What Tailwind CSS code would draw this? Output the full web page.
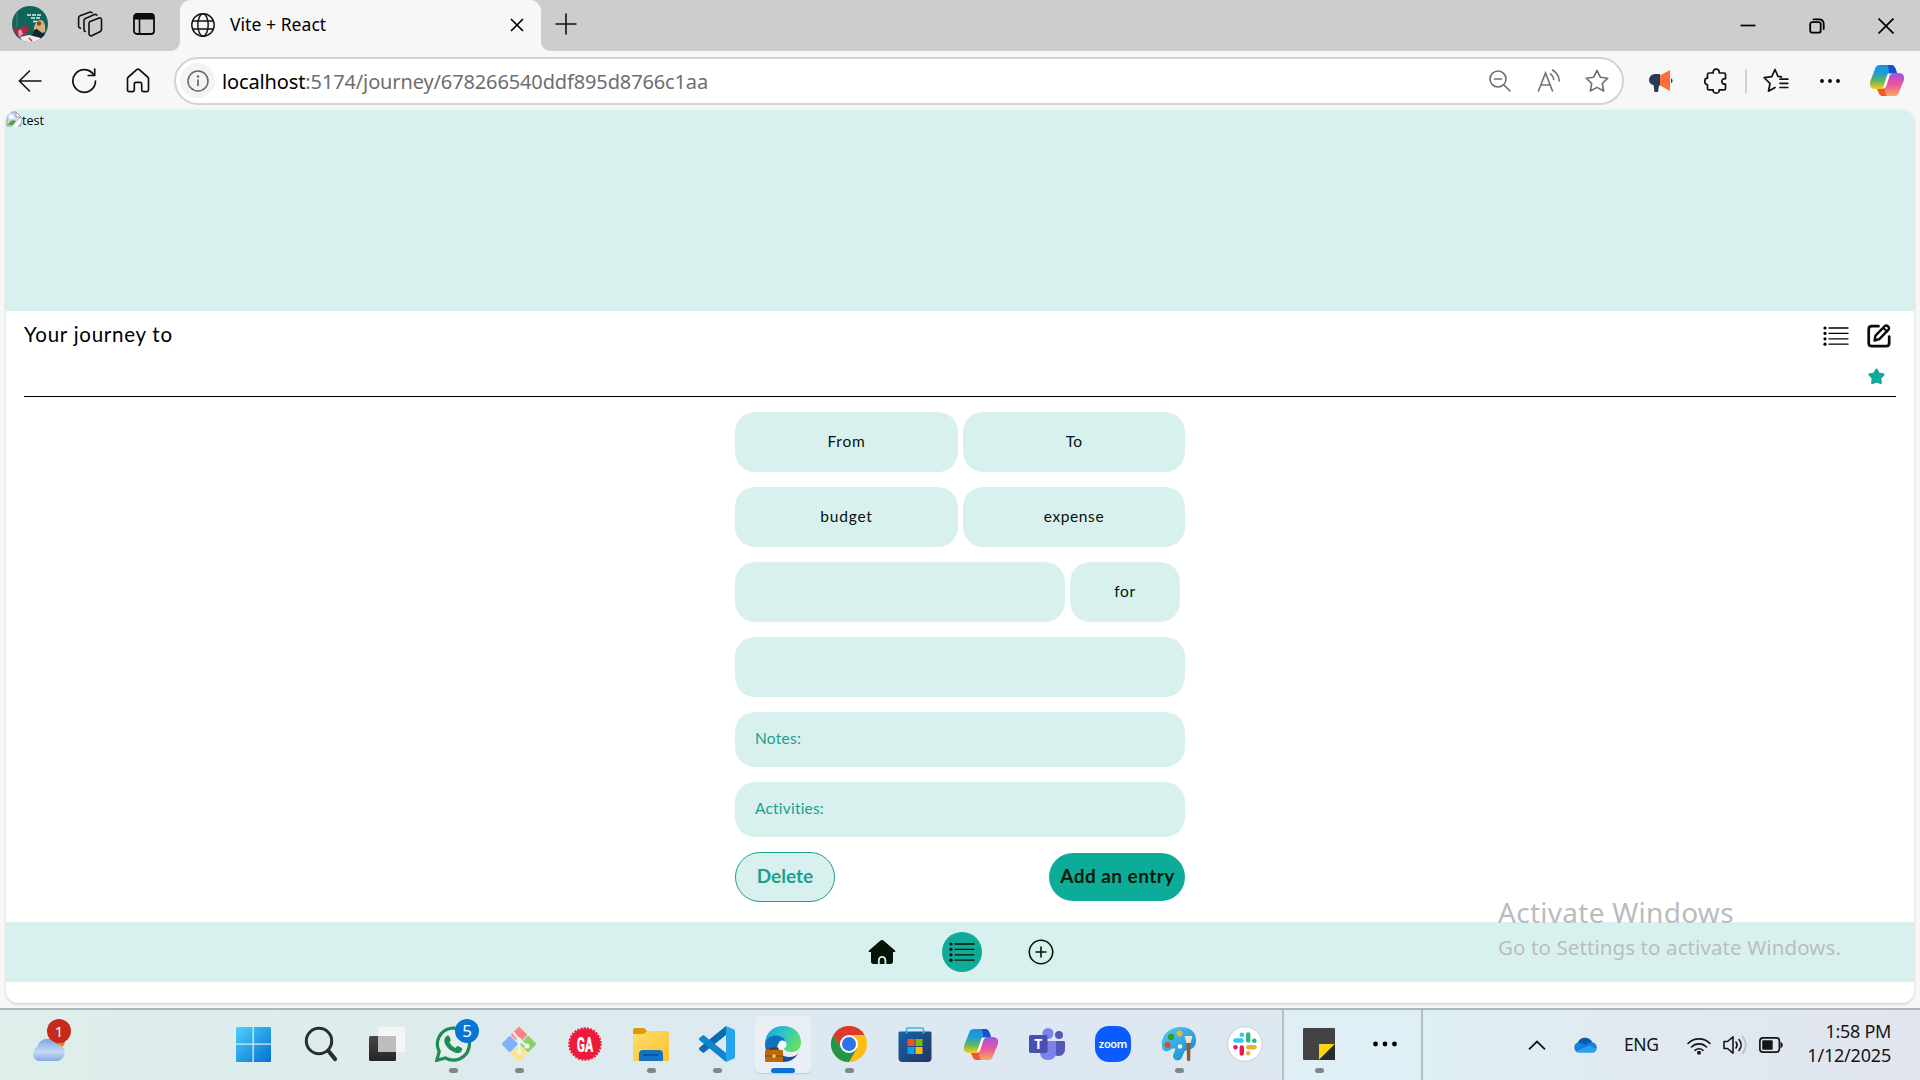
<!DOCTYPE html>
<html lang="en">
<head>
<meta charset="utf-8">
<title>Vite + React</title>
<script src="https://cdn.jsdelivr.net/npm/@tailwindcss/browser@4"></script>
</head>
<body class="w-[1920px] h-[1080px] overflow-hidden bg-[#f7f7f7] font-['Noto_Sans',sans-serif] text-black flex flex-col">
<svg class="absolute size-0" aria-hidden="true">
  <defs>
    <linearGradient id="cpA" x1="0" y1="0" x2="0" y2="1"><stop offset="0" stop-color="#1b8fe8"/><stop offset=".35" stop-color="#1f9fd0"/><stop offset=".65" stop-color="#5fb560"/><stop offset="1" stop-color="#f5cf1c"/></linearGradient>
    <linearGradient id="cpB" x1="0" y1="0" x2="0" y2="1"><stop offset="0" stop-color="#a153e6"/><stop offset=".5" stop-color="#e8559a"/><stop offset="1" stop-color="#fda95c"/></linearGradient>
    <linearGradient id="win" x1="0" y1="0" x2="1" y2="1"><stop offset="0" stop-color="#4fd0fd"/><stop offset="1" stop-color="#0370cf"/></linearGradient>
    <linearGradient id="cloud" x1="0" y1="0" x2="0" y2="1"><stop offset="0" stop-color="#7fa6e4"/><stop offset=".6" stop-color="#c6d8f7"/><stop offset="1" stop-color="#86a8e2"/></linearGradient>
    <linearGradient id="fold" x1="0" y1="0" x2="1" y2="1"><stop offset="0" stop-color="#ffdd6b"/><stop offset="1" stop-color="#fbc02f"/></linearGradient>
    <linearGradient id="edge" x1="0" y1="0" x2="1" y2=".5"><stop offset="0" stop-color="#1c9ede"/><stop offset=".5" stop-color="#2cc3cf"/><stop offset="1" stop-color="#63de66"/></linearGradient>
    <linearGradient id="store" x1="0" y1="0" x2="1" y2="1"><stop offset="0" stop-color="#1563a8"/><stop offset="1" stop-color="#253560"/></linearGradient>
    <linearGradient id="paint" x1="0" y1="0" x2="1" y2="1"><stop offset="0" stop-color="#54d0f5"/><stop offset="1" stop-color="#1380cd"/></linearGradient>
    <linearGradient id="tv" x1="0" y1="0" x2="0" y2="1"><stop offset="0" stop-color="#474747"/><stop offset="1" stop-color="#242424"/></linearGradient>
    <symbol id="copilot" viewBox="0 0 34 31">
      <path d="M10 0h11c3 0 4 2 5 5l1 3h-4c-3 0-4 2-5 5l-3 9c-1 2-2 2-4 2H5c-4 0-6-3-5-7L5 4c1-3 2-4 5-4z" fill="url(#cpA)"/>
      <path d="M17 0h4c3 0 4 2 5 5l1 3h-4c-2 0-3 1-4 2 0-4 0-8-2-10z" fill="#1a4fd0"/>
      <path d="M24 31H13c-3 0-4-2-5-5l-1-2h4c3 0 4-2 5-5l3-8c1-2 2-3 4-3h6c4 0 6 3 5 7l-5 12c-1 3-2 4-5 4z" fill="url(#cpB)"/>
      <path d="M17 31h-4c-3 0-4-2-5-5l-1-2h4c2 0 3-1 4-2 0 4 0 7 2 9z" fill="#ee5a2c"/>
      <path d="M18.500 8.500h3.500c-1.500.5-2.400 2-3 4l-2.500 8c-.6 1.500-1.200 2.500-2.500 3h-2c1-.6 1.500-2 2-3.500l2.500-8c.5-1.600 1-2.800 2-3.500z" fill="#f7f7f7"/>
    </symbol>
    <symbol id="list" viewBox="0 0 26 20"><g fill="currentColor"><circle cx="2" cy="2" r="1.600"/><circle cx="2" cy="7.400" r="1.600"/><circle cx="2" cy="12.800" r="1.600"/><circle cx="2" cy="18.200" r="1.600"/></g><path d="M6 2h19M6 7.400h19M6 12.800h19M6 18.200h19" stroke="currentColor" stroke-width="1.300" stroke-linecap="round"/></symbol>
  </defs>
</svg>

<!-- tab strip -->
<header class="h-[51px] shrink-0 bg-[#cdcdcd] flex items-stretch">
  <div class="w-[60px] flex items-center justify-center pb-[3px]">
    <svg width="36" height="36" viewBox="0 0 36 36"><clipPath id="av"><circle cx="18" cy="18" r="18"/></clipPath><g clip-path="url(#av)"><path fill="#10655a" d="M0 0h36v36H0z"/><path d="M15 9h15M19 12h10M21 15.500h5" stroke="#dff0ec" stroke-width="1.300" stroke-dasharray="4 1"/><path d="M5 7v14" stroke="#4f9388" stroke-width=".8"/><path d="M22 29c-1-7 1-14 5.500-15s6.500 5 5.500 12z" fill="#d3b078"/><circle cx="27" cy="17.500" r="2.200" fill="#7e4a35"/><path d="M20 31c1-6 2-8 5-8l5 4 4 1v6z" fill="#18242e"/><path d="M2 20l4 3 8-4 3 4-3 7-11 1z" fill="#a32b46"/><path d="M6 25l3-2 2 5-4 3z" fill="#e8a0b4"/><path d="M8 31l9-2 12 3-3 4H11z" fill="#efe9e7"/><path d="M17 32l3 3" stroke="#c22b3b" stroke-width="1.500"/></g></svg>
  </div>
  <div class="w-[60px] flex items-center justify-center pb-[3px]">
    <svg width="26" height="26" viewBox="0 0 26 26" fill="none" stroke="#111" stroke-width="1.600" stroke-linejoin="round" stroke-linecap="round"><path d="M13 10.500l8.500-3.300c1.800-.7 3 0 3 1.600v9.500c0 1.300-.5 2-1.600 2.500l-7.600 3.700c-1.700.8-3.300 0-3.300-1.700v-10c0-1.100.3-1.800 1-2.300z"/><path d="M8.300 20.500c-.9-.2-1.300-.8-1.300-1.700V9.500c0-1 .5-1.700 1.400-2.100L17.500 3.500c1-.4 1.800-.1 2.300.7"/><path d="M3.500 17.200c-1-.3-1.900-.8-1.900-2V6.900c0-1 .6-1.800 1.500-2.200L12.500 1.200c1-.3 2-.1 2.500.7"/></svg>
  </div>
  <div class="w-[48px] flex items-center justify-center pb-[3px]">
    <svg width="22" height="22" viewBox="0 0 22 22"><rect x="1" y="1" width="20" height="20" rx="3" fill="none" stroke="#0b0b0b" stroke-width="1.800"/><path d="M1 4a3 3 0 013-3h14a3 3 0 013 3v2.500H1z" fill="#0b0b0b"/><path d="M6.500 6v15" stroke="#0b0b0b" stroke-width="1.600"/></svg>
  </div>
  <div class="w-[12px] flex items-end justify-end"><svg width="10" height="10" viewBox="0 0 10 10"><path d="M10 0v10H0C6 10 10 6 10 0z" fill="#f7f7f7"/></svg></div>
  <div class="w-[361px] bg-[#f7f7f7] rounded-t-[11px] flex items-center pl-[11px] pb-[2px]">
    <svg width="24" height="24" viewBox="0 0 24 24" fill="none" stroke="#111" stroke-width="1.400"><circle cx="12" cy="12" r="11.200"/><ellipse cx="12" cy="12" rx="5.200" ry="11.200"/><path d="M1.800 8h20.400M1.800 16h20.400"/></svg>
    <span class="ml-[15px] pb-px text-[17.500px] tracking-[.05px] whitespace-nowrap">Vite + React</span>
    <svg class="ml-auto mr-[17px]" width="14" height="14" viewBox="0 0 14 14" stroke="#000" stroke-width="1.700"><path d="M1 1l12 12M13 1L1 13"/></svg>
  </div>
  <div class="w-[10px] flex items-end"><svg width="10" height="10" viewBox="0 0 10 10"><path d="M0 0v10h10C4 10 0 6 0 0z" fill="#f7f7f7"/></svg></div>
  <div class="w-[30px] flex items-center justify-center pb-[4px]"><svg width="22" height="22" viewBox="0 0 22 22" stroke="#111" stroke-width="1.600"><path d="M11 .5v21M.5 11h21"/></svg></div>
  <div class="ml-auto flex items-center">
    <div class="w-[69px] flex justify-center"><svg width="16" height="16" viewBox="0 0 16 16" stroke="#000" stroke-width="1.700"><path d="M.5 7.500h15"/></svg></div>
    <div class="w-[69px] flex justify-center"><svg width="16" height="16" viewBox="0 0 16 16" fill="none" stroke="#000" stroke-width="1.800"><rect x="1.200" y="4.200" width="10.500" height="10.500" rx="2"/><path d="M4.500 1.400H10c3 0 4.700 2 4.700 4.700V11" stroke-linecap="round"/></svg></div>
    <div class="w-[69px] flex justify-center"><svg width="16" height="16" viewBox="0 0 16 16" stroke="#000" stroke-width="1.700"><path d="M.5.5l15 15M15.500.5l-15 15"/></svg></div>
  </div>
</header>

<!-- toolbar -->
<nav class="h-[59px] shrink-0 flex items-center">
  <div class="w-[60px] flex justify-center"><svg width="24" height="22" viewBox="0 0 24 22" fill="none" stroke="#111" stroke-width="1.600" stroke-linecap="round" stroke-linejoin="round"><path d="M23 11H1.500M11.500 1L1.300 11l10.200 10"/></svg></div>
  <div class="w-[48px] flex justify-center"><svg width="26" height="26" viewBox="0 0 26 26" fill="none" stroke="#111" stroke-width="1.700" stroke-linecap="round" stroke-linejoin="round"><path d="M24.500 13A11.300 11.300 0 1 1 22.800 7"/><path d="M23.700 1.200v6.300h-6.500"/></svg></div>
  <div class="w-[60px] flex justify-center"><svg width="24" height="25" viewBox="0 0 24 25" fill="none" stroke="#111" stroke-width="1.700" stroke-linejoin="round"><path d="M1.500 10.800c0-.8.300-1.300.9-1.800l8.300-7.300c.9-.7 1.700-.7 2.600 0L21.600 9c.6.500.9 1 .9 1.800V22c0 1-.6 1.600-1.600 1.600h-3.600c-1 0-1.600-.6-1.600-1.600v-6c0-1-.6-1.600-1.600-1.600H9.900c-1 0-1.600.6-1.600 1.600v6c0 1-.6 1.600-1.600 1.600H3.100c-1 0-1.600-.6-1.600-1.600z"/></svg></div>
  <div class="ml-[6px] w-[1450px] h-[48px] rounded-full bg-white border-2 border-[#d3d3d3] flex items-center pl-[4px] pr-px">
    <span class="size-[35px] rounded-full bg-[#f3f3f3] flex items-center justify-center"><svg width="22" height="22" viewBox="0 0 22 22" fill="none" stroke="#666" stroke-width="1.500"><circle cx="11" cy="11" r="10"/><path d="M11 9.500v6.500" stroke-width="1.700"/><circle cx="11" cy="6.500" r="1.200" fill="#666" stroke="none"/></svg></span>
    <span class="ml-[7px] pt-[2px] text-[20px] tracking-[-.13px] text-[#6e6e6e] whitespace-nowrap"><span class="text-black">localhost</span>:5174/journey/678266540ddf895d8766c1aa</span>
    <div class="ml-auto flex items-center text-[#707070]">
      <div class="w-[48px] flex justify-center"><svg width="22" height="22" viewBox="0 0 22 22" fill="none" stroke="currentColor" stroke-width="1.600" stroke-linecap="round"><circle cx="9" cy="9" r="8"/><path d="M15 15l6 6M5.500 9h7"/></svg></div>
      <div class="w-[49px] flex justify-center"><svg width="24" height="24" viewBox="0 0 24 24" fill="none" stroke="currentColor" stroke-width="1.600" stroke-linecap="round"><path d="M1.500 22L8.500 4l7 18M4 16h9M13.500 4.800c2 1.500 3 3.300 3.200 5.700M15.500 1c4 2.300 6.500 6 6.800 11"/></svg></div>
      <div class="w-[48px] flex justify-center"><svg width="24" height="24" viewBox="0 0 24 24" fill="none" stroke="currentColor" stroke-width="1.600" stroke-linejoin="round"><path d="M12 1.300l3.300 6.900 7.500 1-5.500 5.300 1.400 7.500-6.700-3.600L5.300 22l1.400-7.500L1.200 9.200l7.500-1z"/></svg></div>
    </div>
  </div>
  <div class="w-[74px] flex justify-center"><svg width="24" height="24" viewBox="0 0 24 24"><path d="M11 5H6a6 6 0 00-6 6c0 3 2 4.500 4.500 5l1 7h3.500l1-6.500h1z" fill="#263c55"/><path d="M11 6.500L21 1v21l-10-5.500z" fill="#ff6f3c"/><path d="M22 9.500c2 .5 2 4 0 4.500z" fill="#263c55"/></svg></div>
  <div class="w-[36px] flex justify-center"><svg width="24" height="26" viewBox="0 0 24 26" fill="none" stroke="#111" stroke-width="1.700" stroke-linejoin="round"><path d="M5 5h4.200c-.4-2.500 1-3.800 3-3.800s3.400 1.300 3 3.800H20c1 0 1.500.5 1.500 1.500v4.200c-2.500-.3-3.700 1-3.700 2.700s1.200 3 3.700 2.700v4.300c0 1-.5 1.500-1.500 1.500h-4.800c.4 2-1 3.200-3 3.200s-3.400-1.200-3-3.200H5c-1 0-1.500-.5-1.500-1.500v-3.800c-1.700 0-2.700-1.200-2.700-3.200s1-3.200 2.700-3.200V6.500C3.500 5.500 4 5 5 5z"/></svg></div>
  <div class="w-[24px] flex justify-center"><span class="w-[2px] h-[24px] bg-[#d0d0d0]"></span></div>
  <div class="w-[37px] flex justify-center pr-px"><svg width="26" height="25" viewBox="0 0 26 25" fill="none" stroke="#111" stroke-width="1.700" stroke-linejoin="round" stroke-linecap="round"><path d="M12 19.500l-6.500 3.700L7 15.500 1.200 9.700l7.600-1L12 1.500l3 6.800 3.500.6M17 11.200h7.800M17 15.300h7.800M17 19.500h7.800"/></svg></div>
  <div class="w-[70px] flex justify-center"><svg width="22" height="6" viewBox="0 0 22 6"><circle cx="3" cy="3" r="1.900"/><circle cx="11" cy="3" r="1.900"/><circle cx="19" cy="3" r="1.900"/></svg></div>
  <div class="w-[44px] flex justify-center"><svg width="34" height="31"><use href="#copilot"/></svg></div>
</nav>

<!-- page -->
<main class="mx-[6px] h-[893px] shrink-0 rounded-[12px] bg-white overflow-hidden shadow-[0_1px_3px_#c8c8c8] flex flex-col">
  <div class="h-[201px] shrink-0 bg-[#d9f1ee] flex items-start">
    <svg class="mt-px" width="16" height="16" viewBox="0 0 16 16"><path d="M1 1h9l5 5v9H1z" fill="#c6d9f7" stroke="#9a9a9a"/><path d="M10 1v5h5z" fill="#fff" stroke="#9a9a9a"/><path d="M2 14c1-4 5-6 8-4l-3 4z" fill="#55a63a"/><path d="M3 6a2 2 0 014-1 2 1.500 0 011 2.500H3z" fill="#fff"/><path d="M6 16l9-9v4l-4 5z" fill="#fff"/></svg>
    <span class="mt-px text-[12.500px] leading-[19px] font-medium font-['Open_Sans',sans-serif] tracking-[0px]">test</span>
  </div>
  <div class="mx-[18px] h-[86px] shrink-0 border-b border-black flex justify-between font-['Lato',sans-serif]">
    <h1 class="mt-[9px] text-[20.500px] leading-[28px] tracking-[.75px]">Your journey to</h1>
    <div class="flex flex-col items-end pt-[13px]">
      <div class="flex items-center gap-[18px] pr-[5px]">
        <svg width="26" height="20"><use href="#list"/></svg>
        <svg width="24" height="24" viewBox="0 0 24 24" fill="none" stroke="#0b0b0b" stroke-linejoin="round" stroke-linecap="round"><path d="M11.500 2.200H5C3 2.200 1.700 3.300 1.700 5.300V19c0 2 1.300 3.200 3.300 3.200h14c2 0 3.200-1.200 3.200-3.200v-6.500" stroke-width="2.700"/><path d="M7.500 16.500l1-4.800 9-9.300c2.300-2.200 5.800 1 3.800 3.500l-9 9.300z" stroke-width="2.400"/><path d="M16.500 4l3.500 3.500" stroke-width="2"/></svg>
      </div>
      <svg class="mt-[20px] mr-[11px]" width="17" height="17" viewBox="0 0 17 17"><path d="M8.500 1.800l2 3.900 4.700.8-3.200 3.500.6 4.800-4.100-1.500-4.100 1.500.6-4.800L1.800 6.500l4.700-.8z" fill="#10ab98" stroke="#10ab98" stroke-width="2.600" stroke-linejoin="round"/></svg>
    </div>
  </div>
  <section class="mx-auto mt-[15px] w-[450px] flex flex-col gap-[15px] text-[15.500px] text-[#06110f] font-['Lato',sans-serif]">
    <div class="flex gap-[5px]">
      <div class="w-[223px] h-[60px] rounded-[20px] bg-[#d9f1ee] flex items-center justify-center tracking-[.8px]">From</div>
      <div class="w-[222px] h-[60px] rounded-[20px] bg-[#d9f1ee] flex items-center justify-center tracking-[.1px]">To</div>
    </div>
    <div class="flex gap-[5px]">
      <div class="w-[223px] h-[60px] rounded-[20px] bg-[#d9f1ee] flex items-center justify-center tracking-[.8px]">budget</div>
      <div class="w-[222px] h-[60px] rounded-[20px] bg-[#d9f1ee] flex items-center justify-center tracking-[.6px]">expense</div>
    </div>
    <div class="flex gap-[5px]">
      <div class="w-[330px] h-[60px] rounded-[20px] bg-[#d9f1ee]"></div>
      <div class="w-[110px] h-[60px] rounded-[20px] bg-[#d9f1ee] flex items-center justify-center tracking-[.6px]">for</div>
    </div>
    <div class="h-[60px] rounded-[20px] bg-[#d9f1ee]"></div>
    <div class="h-[55px] rounded-[20px] bg-[#d9f1ee] flex items-center pl-[20px] pb-[2px] text-[#1a9f90] tracking-[.25px]">Notes:</div>
    <div class="h-[55px] rounded-[20px] bg-[#d9f1ee] flex items-center pl-[20px] pb-[2px] text-[#1a9f90] tracking-[.2px]">Activities:</div>
    <div class="flex items-center justify-between text-[19px] font-bold">
      <button class="w-[100px] h-[50px] rounded-[25px] border border-[#1a9f90] bg-[#d9f1ee] text-[#1a9f90] pb-[2px]">Delete</button>
      <button class="w-[136px] h-[48px] rounded-[24px] bg-[#0dac99] text-[#051a0a] whitespace-nowrap pb-[2px] pl-px tracking-[.45px]">Add an entry</button>
    </div>
  </section>
  <footer class="mt-[20px] h-[60px] shrink-0 bg-[#d9f1ee] flex items-center justify-center gap-[46px] pl-px text-[#051505]">
    <svg width="28" height="26" viewBox="0 0 28 26"><path d="M12.200 1.800c1.200-1 2.400-1 3.600 0L27 11.500c.8.800.3 1.500-.6 1.500H25v9.500c0 1.600-.9 2.500-2.500 2.500h-17C3.900 25 3 24.100 3 22.500V13H1.600C.7 13 .2 12.300 1 11.500z" fill="#051505"/><path d="M10.800 25.500v-4.300a3.300 3.300 0 016.600 0v4.300" fill="none" stroke="#d9f1ee" stroke-width="1.800"/></svg>
    <div class="size-[40px] rounded-full bg-[#10ab98] flex items-center justify-center"><svg width="26" height="20"><use href="#list"/></svg></div>
    <svg width="26" height="26" viewBox="0 0 26 26" fill="none" stroke="currentColor" stroke-width="1.600" stroke-linecap="round"><circle cx="13" cy="13" r="11.700"/><path d="M13 8v10M8 13h10"/></svg>
  </footer>
</main>

<!-- activation watermark floating over the page -->
<div class="absolute left-[1498px] top-[893px] text-[#b9bdbd] whitespace-nowrap">
  <p class="text-[28px] leading-[38px] tracking-[.28px]">Activate Windows</p>
  <p class="text-[20.500px] leading-[32px] tracking-[.1px]">Go to Settings to activate Windows.</p>
</div>

<!-- taskbar -->
<div class="mt-[5px] h-[72px] shrink-0 border-t-2 border-[#adb5bb] bg-linear-to-r from-[#deeeea] via-[#dce8f2] to-[#e1e6ee] flex items-stretch">
  <div class="w-[222px] flex items-start pl-[30px] pt-[18px]">
    <div class="relative">
      <svg width="36" height="36" viewBox="0 0 36 36"><circle cx="27" cy="13" r="8" fill="#ee7a1c"/><path d="M8 33a8 8 0 01-.5-14.500A10 10 0 0126 16a8.600 8.600 0 012 17z" fill="url(#cloud)"/></svg>
      <span class="absolute left-[17px] -top-[9px] size-[24px] rounded-full bg-[#c42b1c] text-white text-[15px] flex items-center justify-center">1</span>
    </div>
  </div>
  <div class="flex [&>div]:w-[66px] [&>div]:relative [&>div]:flex [&>div]:justify-center [&>div]:items-start [&>div]:pt-[16px]">
    <div><svg class="-ml-[4px]" width="36" height="36" viewBox="0 0 36 36"><path d="M2 1h15.500v16.500H1V2a1 1 0 011-1zM18.800 1H35a1 1 0 011 1v15.500H18.800zM1 18.800h16.500V36H2a1 1 0 01-1-1zM18.800 18.800H36V35a1 1 0 01-1 1H18.800z" fill="url(#win)"/></svg></div>
    <div><svg width="36" height="36" viewBox="0 0 36 36" fill="none" stroke="#2b2e2f"><circle cx="16" cy="15" r="12.700" stroke-width="3"/><path d="M25.500 25l6.500 8" stroke-width="4.200" stroke-linecap="round"/></svg></div>
    <div><svg width="36" height="36" viewBox="0 0 36 36"><rect y="10" width="27" height="25" rx="1.500" fill="url(#tv)"/><rect x="9" y="1" width="27" height="25" rx="1.500" fill="#f5f5f5" fill-opacity=".95"/><path d="M9 10h18v16H9z" fill="#bdbdbd"/></svg></div>
    <div><svg width="36" height="36" viewBox="0 0 36 36"><path d="M1.800 34.300l2.400-8.800A16 16 0 1110.300 31.900z" fill="#e5f0ee" stroke="#1f8b55" stroke-width="3.200"/><path d="M11.300 10.300c1-1 2.600-.9 3.100.3l1.300 3c.3.800-.2 1.500-1.300 2.700 1.400 2.700 3.400 4.500 6.200 5.600 1.400-1.600 1.900-2.100 2.800-1.700l3 1.500c1 .5 1 1.200.6 2.500-.7 2.200-3.300 3.300-5.700 2.700-5.500-1.300-9.800-5.200-11.600-9.800-.9-2.500-.1-5.200 1.600-6.800z" fill="#1f8b55"/></svg>
      <span class="absolute left-[35px] top-[9px] size-[24px] rounded-full bg-[#0a74d4] text-white text-[17px] flex items-center justify-center">5</span><i class="absolute bottom-[7px] w-[9px] h-[5px] rounded-full bg-[#808789]"></i></div>
    <div><svg width="36" height="36" viewBox="0 0 36 36"><g transform="rotate(45 18 18)"><rect x="5.500" y="5.500" width="12" height="12" rx="1.500" fill="#fb8383"/><rect x="18.500" y="5.500" width="12" height="12" rx="1.500" fill="#8fd165"/><rect x="5.500" y="18.500" width="12" height="12" rx="1.500" fill="#82b1fc"/><rect x="18.500" y="18.500" width="12" height="12" rx="1.500" fill="#fde38a"/></g><path d="M12 6l6 8v12M18 14l8 6" fill="none" stroke="#e9f1f5" stroke-width="2.200"/><circle cx="18" cy="14" r="2.600" fill="#e9f1f5"/><circle cx="26" cy="20" r="2.600" fill="#e9f1f5"/><circle cx="18" cy="26" r="2.600" fill="#e9f1f5"/></svg><i class="absolute bottom-[7px] w-[9px] h-[5px] rounded-full bg-[#808789]"></i></div>
    <div><svg class="overflow-visible" width="36" height="36" viewBox="0 0 36 36"><circle cx="18" cy="18" r="15.500" fill="#ec1b3b"/><circle cx="18" cy="18" r="15.800" fill="none" stroke="#ec1b3b" stroke-width="2" stroke-dasharray="2 1.300"/><text x="18" y="25.500" text-anchor="middle" textLength="16.500" lengthAdjust="spacingAndGlyphs" font-family="Roboto" font-weight="900" font-size="21" fill="#fff">GA</text></svg></div>
    <div><svg width="36" height="36" viewBox="0 0 36 36"><path d="M0 4c0-1.200.8-2 2-2h9l4 4-3 4H0z" fill="#d99a0b"/><path d="M0 8h10.500l4-3H34a2 2 0 012 2v28H2a2 2 0 01-2-2z" fill="url(#fold)"/><path d="M6 35v-7c0-2.500 1.500-4 4-4h16c2.500 0 4 1.500 4 4v7z" fill="#1374c6"/><path d="M11 29h14" stroke="#0d4c8c" stroke-width="1.600" stroke-linecap="round"/></svg><i class="absolute bottom-[7px] w-[9px] h-[5px] rounded-full bg-[#808789]"></i></div>
    <div><svg width="36" height="36" viewBox="0 0 36 36"><path d="M27 0v9L4.500 27 .8 24.200c-1-.9-1-2 0-2.900z" fill="#0a6cb0"/><path d="M27 36v-9L4.500 9 .8 11.600c-1 .9-1 2 0 2.900z" fill="#0d85cf"/><path d="M27 0l7.500 3.300c1 .5 1.500 1.200 1.500 2.300v24.800c0 1.100-.5 1.800-1.500 2.300L27 36z" fill="#27a4ef"/></svg><i class="absolute bottom-[7px] w-[9px] h-[5px] rounded-full bg-[#808789]"></i></div>
    <div><span class="absolute left-[5px] top-[6px] w-[56px] h-[57px] rounded-[5px] bg-[#eaeff5] shadow-[0_1px_1px_#c3ccd8]"></span><svg class="relative" width="36" height="36" viewBox="0 0 36 36"><path d="M0 18C0 7 8 0 18 0c11 0 18 7 18 16 0 6-4 10-9 10-5 0-8-2-8-4 0-1 2-2 2-4 0-4-4-6-8-6-5 0-10 3-13 6z" fill="url(#edge)"/><path d="M0 18C1 12 6 9.500 11 9.500c6 0 10 4 10 8.500-3-4-9-2-9 5 0 4 2 7 6 9H8C2 29 0 23 0 18z" fill="#1270c4"/><path d="M13 20c-1 7 5 11 11 11 4 0 7-1 9-3.500-3 5.500-8 8.500-15 8.500l-2-3c-4-4-5-9-3-13z" fill="#154e9e"/><circle cx="17.500" cy="18.500" r="4" fill="#f0f6fb"/><path d="M5 26v-2c0-1 .6-1.600 1.600-1.600h5c1 0 1.600.6 1.600 1.600v2" fill="none" stroke="#5d3710" stroke-width="1.600"/><rect y="24" width="18" height="12" rx="1" fill="#b96a0c"/><path d="M0 30h18" stroke="#874705"/><rect x="7.500" y="28.500" width="3" height="3" fill="#ffd86a"/></svg><i class="absolute bottom-[7px] w-[24px] h-[5px] rounded-full bg-[#0a74d4]"></i></div>
    <div><svg width="36" height="36" viewBox="0 0 36 36"><circle cx="18" cy="18" r="18" fill="#fbbc13"/><path d="M2.400 9A18 18 0 0018 36l7.800-13.500L18 18l-7.800 4.500z" fill="#23964a"/><path d="M2.400 9A18 18 0 0133.600 9H18v9l-7.800 4.500z" fill="#dc3a2c"/><circle cx="18" cy="18" r="9" fill="#fff"/><circle cx="18" cy="18" r="7" fill="#2f71e8"/></svg><i class="absolute bottom-[7px] w-[9px] h-[5px] rounded-full bg-[#808789]"></i></div>
    <div><svg width="36" height="36" viewBox="0 0 36 36"><path d="M9.500 7V3.500c0-1 .5-1.500 1.500-1.500h14c1 0 1.500.5 1.500 1.500V7" fill="none" stroke="#31bde9" stroke-width="1.700"/><path d="M1.500 7c0-1 .6-1.500 1.500-1.500h30c.9 0 1.500.5 1.500 1.500v25a4 4 0 01-4 4h-25a4 4 0 01-4-4z" fill="url(#store)"/><path d="M9.500 5v2.500M26.500 5v2.500" stroke="#31bde9" stroke-width="1.700"/><path fill="#f25022" d="M10.500 13h7v7h-7z"/><path fill="#7fba00" d="M18.500 13h7v7h-7z"/><path fill="#00a4ef" d="M10.500 21h7v7h-7z"/><path fill="#ffb900" d="M18.500 21h7v7h-7z"/></svg></div>
    <div><svg class="mt-[3px]" width="34" height="31"><use href="#copilot"/></svg></div>
    <div><svg width="36" height="36" viewBox="0 0 36 36"><circle cx="30" cy="9" r="4" fill="#5358b8"/><circle cx="19" cy="7.500" r="5.500" fill="#7b83eb"/><path d="M25 15h9.500c1 0 1.500.6 1.500 1.500V23c0 4-2.500 7-6 7s-6-2-6-4z" fill="#5358b8"/><path d="M11 15h16v11c0 5-3 8-8 8s-8-3-8-8z" fill="#7b83eb"/><rect y="9" width="18.500" height="18" rx="1.800" fill="#484fae"/><text x="9.200" y="23.200" text-anchor="middle" font-family="Open Sans" font-weight="700" font-size="14" fill="#fff">T</text></svg></div>
    <div><div class="size-[36px] rounded-[14px] bg-[#0b5cff] flex items-center justify-center text-white text-[11px] leading-none font-semibold tracking-[-.3px] pb-[2px]">zoom</div></div>
    <div><svg width="36" height="36" viewBox="0 0 36 36"><path d="M1 21C-1 9 9 1 20 1c9 0 15 5 15 13 0 9-5 9-9 10s-3 5-6 9c-3 3-8 1-8-3 0-3 3-5 2-7s-4 1-7 2-6-1-6-4z" fill="url(#paint)"/><circle cx="6.500" cy="19" r="3" fill="#d3502a"/><circle cx="10" cy="11" r="3.200" fill="#2f9e2a"/><circle cx="18.500" cy="7.500" r="3" fill="#f7b617"/><circle cx="19" cy="20.500" r="2.300" fill="#e5f3fb"/><path d="M25.500 17h4l-.3 17c0 1.500-3 1.500-3.200 0z" fill="#925a25"/><path d="M23.500 10h8l-2 7h-4z" fill="#ece1cf"/></svg><i class="absolute bottom-[7px] w-[9px] h-[5px] rounded-full bg-[#808789]"></i></div>
    <div class="-mr-[1px]"><svg width="36" height="36" viewBox="0 0 36 36" stroke-linecap="round" stroke-width="4.400"><circle cx="18" cy="18" r="17.300" fill="#fff" stroke="#c8ced3" stroke-width="1"/><path d="M8.500 14.500h6" stroke="#36c5f0"/><circle cx="14.800" cy="8.800" r="2.300" fill="#36c5f0"/><path d="M21.200 8.500v6" stroke="#2eb67d"/><circle cx="27.300" cy="14.700" r="2.300" fill="#2eb67d"/><path d="M21.200 21.300h6.300" stroke="#ecb22e"/><circle cx="21.200" cy="27.300" r="2.300" fill="#ecb22e"/><path d="M14.800 21.500v6" stroke="#e01e5a"/><circle cx="8.500" cy="21.300" r="2.300" fill="#e01e5a"/></svg></div>
  </div>
  <div class="ml-[5px] w-[141px] border-x-2 border-[#b4bfc5] bg-[#def0f5] flex [&>div]:w-[66px] [&>div]:relative [&>div]:flex [&>div]:justify-center">
    <div class="pt-[18px] ml-[2px]"><svg width="32" height="32" viewBox="0 0 32 32"><rect width="32" height="32" rx="1" fill="#434343"/><path d="M16 16h16L16 32z" fill="#fbd40b"/><path d="M32 16v16H16z" fill="#2c2c2c"/></svg><i class="absolute bottom-[7px] w-[9px] h-[5px] rounded-full bg-[#808789]"></i></div>
    <div class="pt-[31px]"><svg width="26" height="6" viewBox="0 0 26 6"><circle cx="3.500" cy="3" r="2.400"/><circle cx="13" cy="3" r="2.400"/><circle cx="22.500" cy="3" r="2.400"/></svg></div>
  </div>
  <div class="flex-1 bg-linear-to-r from-[#def0f4] via-[#e1e8f0] to-[#e1e6ee] flex items-center justify-end pr-[29px] text-[#151515]">
    <svg width="18" height="10" viewBox="0 0 18 10" fill="none" stroke="#151515" stroke-width="1.800"><path d="M1 9.300l8-7.800 8 7.800"/></svg>
    <svg class="ml-[27px]" width="24" height="16" viewBox="0 0 24 16"><path d="M5.500 15.500a5.200 5.200 0 01-.7-10A8 8 0 0119.500 5.500c2 0 4.300 2 4.300 5 0 3-2 5-4.500 5z" fill="#1482d8"/><path d="M5 5.500C7 0 15 -1.500 19 5.300 17 5 15 6 13 8z" fill="#0b5cb4"/><path d="M2.500 14.800L16 8.500l7.200 3.500c-.7 2.300-2.200 3.500-4 3.500H5.500c-1 0-2-.2-3-.7z" fill="#2ba3ec"/></svg>
    <span class="ml-[27px] w-[37px] pb-px text-[17.500px] tracking-[-.4px] whitespace-nowrap">ENG</span>
    <svg class="ml-[26px]" width="24" height="19" viewBox="0 0 24 19" fill="none" stroke="#151515" stroke-width="1.600" stroke-linecap="round"><path d="M1 7.500a15.500 15.500 0 0122 0M4.500 11a10.600 10.600 0 0115 0M8 14.300a5.800 5.800 0 018 0"/><circle cx="12" cy="16.700" r="2" fill="#151515" stroke="none"/></svg>
    <svg class="ml-[12px]" width="24" height="20" viewBox="0 0 24 20" fill="none" stroke="#151515" stroke-width="1.600" stroke-linejoin="round" stroke-linecap="round"><path d="M1 6.500h3.500L10 1.800v16.400l-5.500-4.700H1zM13 7c1.300 1.800 1.300 4.200 0 6M16 4.500c2.800 3.300 2.800 7.700 0 11"/><path d="M19.500 1.500c4.300 4.700 4.300 12.300 0 17" stroke="#b9bec3"/></svg>
    <svg class="ml-[12px]" width="24" height="16" viewBox="0 0 24 16"><rect x=".9" y=".9" width="19.500" height="14.200" rx="3.200" fill="none" stroke="#151515" stroke-width="1.700"/><rect x="3.200" y="3.300" width="10.500" height="9.400" rx="1" fill="#151515"/><path d="M21.500 5c3 .5 3 5.500 0 6z" fill="#151515"/></svg>
    <div class="w-[108px] text-right text-[18px] leading-[24px] pb-[4px]"><p class="tracking-[-.3px]">1:58 PM</p><p class="tracking-[-.2px]">1/12/2025</p></div>
  </div>
</div>
</body>
</html>
